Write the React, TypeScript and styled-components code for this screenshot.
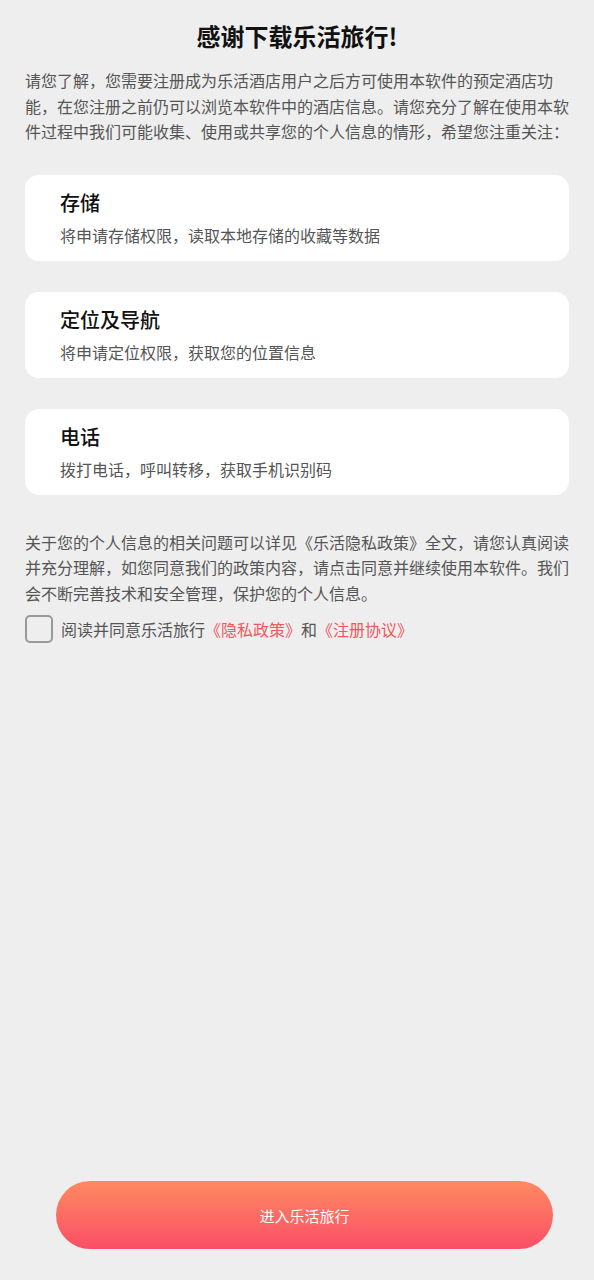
import styled, { createGlobalStyle } from 'styled-components';

const permissions = [
  { title: '存储', desc: '将申请存储权限，读取本地存储的收藏等数据' },
  { title: '定位及导航', desc: '将申请定位权限，获取您的位置信息' },
  { title: '电话', desc: '拨打电话，呼叫转移，获取手机识别码' },
];

export default function App() {
  return (
    <>
      <GlobalStyle />
      <Page>
        <Title>感谢下载乐活旅行!</Title>
        <Intro>
          请您了解，您需要注册成为乐活酒店用户之后方可使用本软件的预定酒店功能，在您注册之前仍可以浏览本软件中的酒店信息。请您充分了解在使用本软件过程中我们可能收集、使用或共享您的个人信息的情形，希望您注重关注：
        </Intro>

        <CardList>
          {permissions.map((item) => (
            <Card key={item.title}>
              <CardTitle>{item.title}</CardTitle>
              <CardDesc>{item.desc}</CardDesc>
            </Card>
          ))}
        </CardList>

        <Notice>
          关于您的个人信息的相关问题可以详见《乐活隐私政策》全文，请您认真阅读并充分理解，如您同意我们的政策内容，请点击同意并继续使用本软件。我们会不断完善技术和安全管理，保护您的个人信息。
        </Notice>

        <AgreeRow>
          <CheckBox />
          <AgreeText>
            阅读并同意乐活旅行<Link>《隐私政策》</Link>和<Link>《注册协议》</Link>
          </AgreeText>
        </AgreeRow>

        <Spacer />

        <EnterButton>进入乐活旅行</EnterButton>
      </Page>
    </>
  );
}

/* STYLES */
const GlobalStyle = createGlobalStyle`
  html, body {
    margin: 0;
    padding: 0;
    background: #eeeeee;
  }
  * {
    box-sizing: border-box;
  }
`;

const Page = styled.div`
  display: flex;
  flex-direction: column;
  width: 594px;
  height: 1280px;
  padding: 19px 25px 31px;
  background: #eeeeee;
  font-family: 'Noto Sans CJK SC', 'Noto Sans', sans-serif;
`;

const Title = styled.h1`
  margin: 0;
  text-align: center;
  color: #111;
  font-size: 24px;
  font-weight: 700;
  line-height: 34px;
`;

const Intro = styled.p`
  margin: 15px 0 0;
  color: #555;
  font-size: 16px;
  line-height: 25.5px;
`;

const CardList = styled.div`
  display: flex;
  flex-direction: column;
  gap: 31px;
  margin-top: 30px;
`;

const Card = styled.div`
  display: flex;
  flex-direction: column;
  height: 86px;
  padding: 14px 35px 0;
  background: #fff;
  border-radius: 14px;
`;

const CardTitle = styled.div`
  color: #111;
  font-size: 20px;
  font-weight: 500;
  line-height: 28px;
`;

const CardDesc = styled.div`
  margin-top: 7px;
  color: #555;
  font-size: 16px;
  line-height: 22px;
`;

const Notice = styled.p`
  margin: 35px 0 0;
  color: #555;
  font-size: 16px;
  line-height: 25.5px;
`;

const AgreeRow = styled.div`
  display: flex;
  align-items: center;
  gap: 8px;
  margin-top: 9px;
`;

const CheckBox = styled.div`
  width: 28px;
  height: 28px;
  border: 2px solid #999;
  border-radius: 5px;
  background: transparent;
`;

const AgreeText = styled.span`
  color: #555;
  font-size: 16px;
  line-height: 24px;
`;

const Link = styled.span`
  color: #f2575c;
`;

const Spacer = styled.div`
  flex: 1;
`;

const EnterButton = styled.button`
  width: 497px;
  height: 68px;
  margin-left: 31px;
  border: none;
  border-radius: 34px;
  background: linear-gradient(180deg, #ff8a62 0%, #fa4e66 100%);
  color: #fff;
  font-family: 'Noto Sans CJK SC', 'Noto Sans', sans-serif;
  font-size: 15px;
`;
